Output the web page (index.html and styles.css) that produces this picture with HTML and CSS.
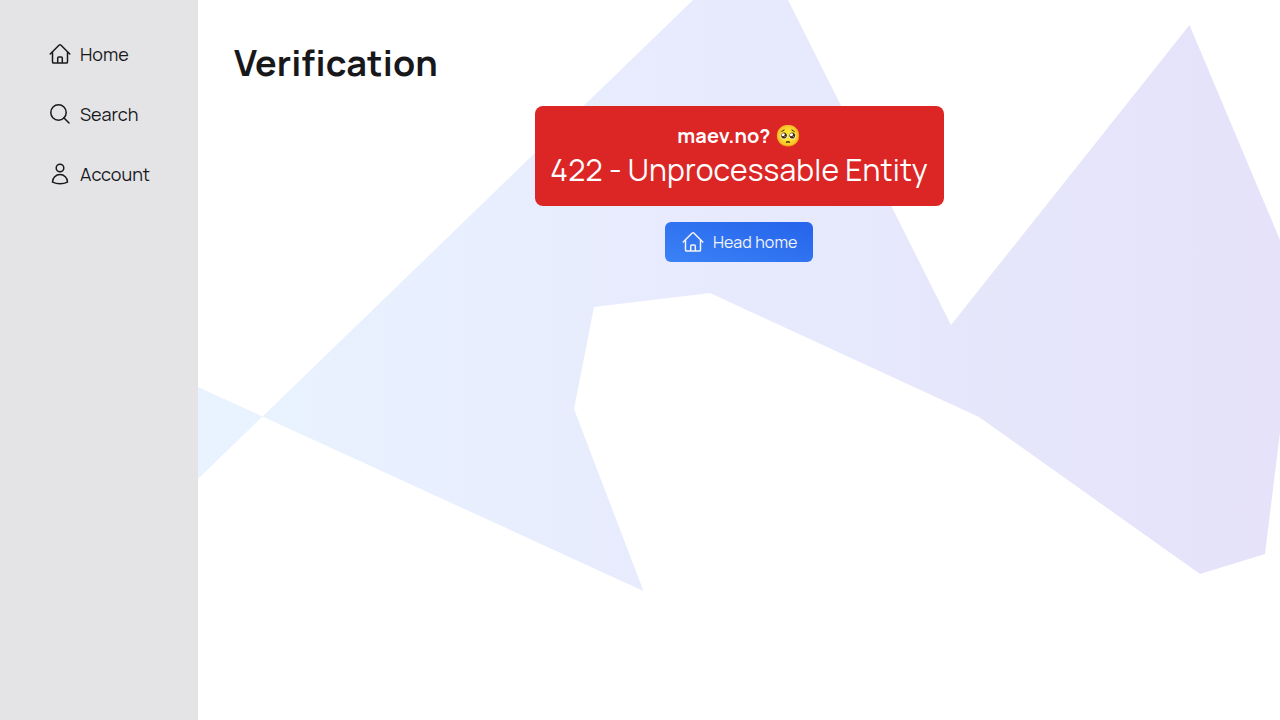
FILE: index.html
```
<!DOCTYPE html>
<html lang="en">
<head>
<meta charset="utf-8">
<title>Verification</title>
<link rel="stylesheet" href="styles.css">
</head>
<body>
<svg class="symbols" aria-hidden="true">
  <symbol id="home" viewBox="0 0 24 24"><path d="M2.2 12 11.2 3a1.1 1.1 0 0 1 1.6 0l9 9M4.5 9.8v10.1c0 .6.5 1.1 1.1 1.1h12.8c.6 0 1.1-.5 1.1-1.1V9.8M9.7 21v-4.9c0-.6.5-1.1 1.1-1.1h2.4c.6 0 1.1.5 1.1 1.1V21"/></symbol>
  <symbol id="search" viewBox="0 0 24 24"><path d="m21 21-5.2-5.2"/><circle cx="10.5" cy="10.5" r="7.7"/></symbol>
  <symbol id="account" viewBox="0 0 24 24"><circle cx="12" cy="6" r="3.8"/><path d="M4.5 20.1a7.5 7.5 0 0 1 15 0A17.9 17.9 0 0 1 12 21.7c-2.7 0-5.2-.6-7.5-1.6z"/></symbol>
</svg>
<div class="layout">
  <nav class="sidebar">
    <a class="nav-link"><svg class="icon"><use href="#home"/></svg><span>Home</span></a>
    <a class="nav-link"><svg class="icon"><use href="#search"/></svg><span>Search</span></a>
    <a class="nav-link"><svg class="icon"><use href="#account"/></svg><span>Account</span></a>
  </nav>
  <main class="content">
    <svg class="backdrop" viewBox="198 0 1082 720" aria-hidden="true">
      <defs><linearGradient id="tint" gradientUnits="userSpaceOnUse" x1="198" y1="0" x2="1280" y2="0">
        <stop offset="0" stop-color="#e9f3ff"/><stop offset=".5" stop-color="#e7eafd"/><stop offset="1" stop-color="#e5e2f9"/>
      </linearGradient></defs>
      <path fill="url(#tint)" d="M198 387 262.500 416.500 693 0H788L951 325 1189.500 25 1280 240V432L1265 554 1200 574 979 417 710 293 594 307 574 409 643.500 591 262.500 416.500 198 479z"/>
    </svg>
    <h1 class="title">Verification</h1>
    <section class="panel">
      <div class="alert">
        <p class="alert-name">maev.no? <span class="emoji">🥺</span></p>
        <p class="alert-message">422 - Unprocessable Entity</p>
      </div>
      <a class="button"><svg class="icon"><use href="#home"/></svg><span>Head home</span></a>
    </section>
  </main>
</div>
</body>
</html>
```
FILE: styles.css
```
* { box-sizing: border-box; }
body { margin: 0; background: #fff; color: #18181b; font-family: Manrope, Inter, sans-serif; overflow: hidden; }
.symbols { display: none; }
.layout { display: flex; height: 720px; }
.sidebar { width: 198px; flex: none; padding: 36px 48px; background: #e4e4e6; display: flex; flex-direction: column; gap: 24px; }
.nav-link { display: flex; align-items: center; gap: 8px; height: 36px; font-size: 18px; line-height: 28px; white-space: nowrap; }
.icon { width: 24px; height: 24px; flex: none; fill: none; stroke: currentColor; stroke-width: 1.5; stroke-linecap: round; stroke-linejoin: round; }
.content { position: relative; flex: 1; padding: 43px 36px; }
.backdrop { position: absolute; inset: 0; width: 1082px; height: 720px; }
.title { position: relative; margin: 0; font-size: 36px; line-height: 40px; font-weight: 700; letter-spacing: .08px; width: max-content; }
.panel { position: relative; margin-top: 23px; display: flex; flex-direction: column; align-items: center; gap: 16px; }
.alert { width: 409px; height: 100px; padding: 16px 0; border-radius: 8px; background: #dc2626; color: #fff; text-align: center; white-space: nowrap; }
.alert p { margin: 0; }
.alert-name { font-size: 20px; line-height: 28px; font-weight: 700; letter-spacing: .1px; }
.emoji { font-size: 21px; line-height: 20px; }
.alert .alert-message { font-size: 30px; line-height: 36px; margin-top: 2px; letter-spacing: .17px; }
.button { display: flex; align-items: center; gap: 8px; width: 148px; height: 40px; padding: 0 16px; border-radius: 6px; background: linear-gradient(to top right, #3b82f6, #2563eb); color: #f4f4f5; font-size: 16px; letter-spacing: .1px; white-space: nowrap; }
```
